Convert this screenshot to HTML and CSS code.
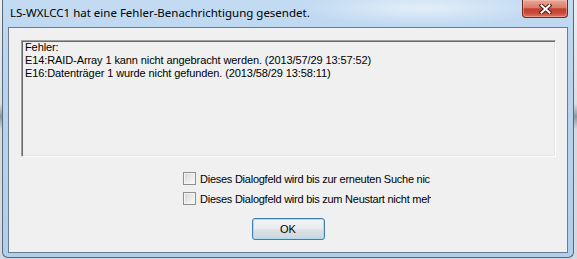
FILE: index.html
```html
<!DOCTYPE html>
<html>

<head>
    <title>Fehler-Benachrichtigung</title>
    <link rel="stylesheet" href="styles.css">
</head>

<body>
    <div class="window">
        <div class="titlebar">
            <span class="title">LS-WXLCC1 hat eine Fehler-Benachrichtigung gesendet.</span>
            <div class="close">
                <svg width="13" height="10" viewBox="0 0 13 10">
                    <path d="M2.5 1.5 L10.5 8.5 M10.5 1.5 L2.5 8.5" stroke="#4a1d17" stroke-width="4" stroke-linecap="square" fill="none" />
                    <path d="M2.5 1.5 L10.5 8.5 M10.5 1.5 L2.5 8.5" stroke="#ffffff" stroke-width="2" stroke-linecap="square" fill="none" />
                </svg>
            </div>
        </div>

        <div class="client">
            <div class="message">
                <div>Fehler:</div>
                <div>E14:RAID-Array 1 kann nicht angebracht werden. (2013/57/29 13:57:52)</div>
                <div>E16:Datenträger 1 wurde nicht gefunden. (2013/58/29 13:58:11)</div>
            </div>

            <div class="options">
                <label class="option">
                    <span class="check"></span>
                    <span class="option-text">Dieses Dialogfeld wird bis zur erneuten Suche nic</span>
                </label>
                <label class="option">
                    <span class="check"></span>
                    <span class="option-text">Dieses Dialogfeld wird bis zum Neustart nicht meh</span>
                </label>
            </div>

            <button class="ok">OK</button>
        </div>
    </div>
</body>

</html>
```

FILE: styles.css
```css
body {
    margin: 0;
    width: 577px;
    height: 259px;
    overflow: hidden;
    background: linear-gradient(to bottom, #eceef0 0%, #dcdfe2 40%, #8d969f 45%, #d8dbde 50%, #d5d9dd 100%);
}

.window {
    box-sizing: border-box;
    width: 572px;
    height: 258px;
    margin-left: 2px;
    padding: 0 5px 4px 5px;
    border: 1px solid #566879;
    border-top: none;
    border-radius: 0 0 6px 6px;
    background:
        radial-gradient(ellipse 120px 18px at 420px 8px, rgba(255, 255, 255, 0.55), rgba(255, 255, 255, 0)),
        linear-gradient(to bottom, #c3dbf2 0%, #b8d4ef 30%, #afcfee 100%);
    display: flex;
    flex-direction: column;
}

.titlebar {
    height: 27px;
    display: flex;
    justify-content: space-between;
    align-items: flex-start;
}

.title {
    font-family: "Noto Sans", sans-serif;
    font-size: 11.5px;
    color: #000;
    padding-left: 2px;
    line-height: 26px;
}

.close {
    box-sizing: border-box;
    width: 46px;
    height: 18px;
    border: 1px solid #6e2a22;
    border-top: none;
    border-radius: 0 0 4px 4px;
    background: linear-gradient(to bottom, #e9a999 0%, #db7b68 45%, #c4402f 52%, #c8473a 75%, #dd7a61 100%);
    box-shadow: inset 0 0 0 1px rgba(255, 200, 190, 0.45);
    display: flex;
    align-items: center;
    justify-content: center;
}

.client {
    flex: 1;
    border: 1px solid #6a7b8c;
    background: #f0f0f0;
    display: flex;
    flex-direction: column;
    font-family: "Liberation Sans", Arial, sans-serif;
    font-size: 11px;
    color: #000;
}

.message {
    box-sizing: border-box;
    width: 535px;
    height: 117px;
    margin: 12px 0 0 12px;
    padding: 0 3px;
    border: 1px solid;
    border-color: #a0a0a0 #ffffff #ffffff #a0a0a0;
    box-shadow: inset 1px 1px #696969, inset -1px -1px #e3e3e3;
    line-height: 13px;
    letter-spacing: -0.1px;
}

.options {
    margin: 11px 0 0 174px;
    display: flex;
    flex-direction: column;
}

.option {
    height: 20px;
    display: flex;
    align-items: center;
}

.check {
    box-sizing: border-box;
    width: 13px;
    height: 13px;
    border: 1px solid #8e8f8f;
    background: linear-gradient(135deg, #d1d4d8 0%, #e8e9eb 50%, #fafafa 100%);
    box-shadow: inset 0 0 0 1px #f4f4f4;
    flex: none;
}

.option-text {
    width: 231px;
    margin-left: 4px;
    white-space: nowrap;
    overflow: hidden;
    padding-top: 2px;
    letter-spacing: -0.25px;
}

.ok {
    align-self: center;
    width: 73px;
    height: 22px;
    margin-top: 10px;
    padding: 0;
    border: 1px solid #3c7fb1;
    border-radius: 3px;
    background: linear-gradient(to bottom, #f2f4f6 0%, #eaedf0 48%, #dde2e6 52%, #cfd5da 100%);
    box-shadow: inset 0 0 0 1px #a8dcf6;
    font-family: "Liberation Sans", Arial, sans-serif;
    font-size: 11px;
    color: #000;
}
```
